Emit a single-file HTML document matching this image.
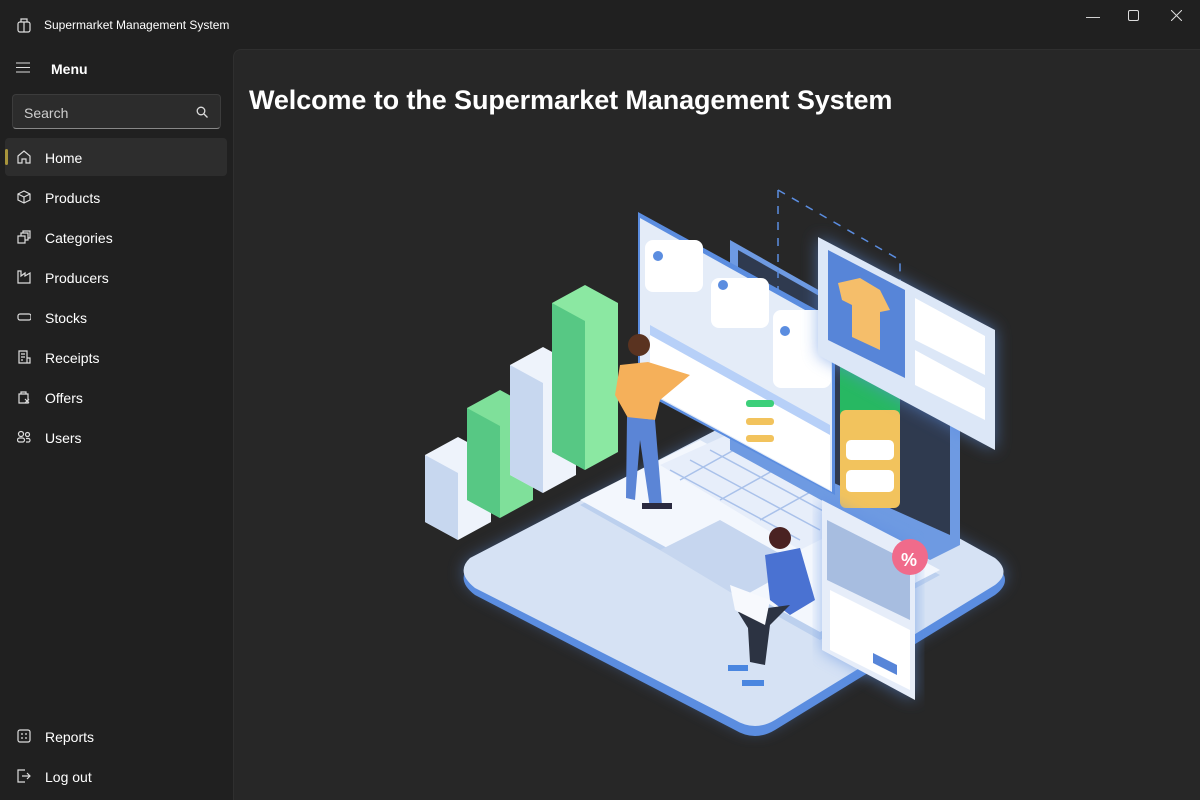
<!DOCTYPE html>
<html><head><meta charset="utf-8"><style>
*{margin:0;padding:0;box-sizing:border-box}
body{width:1200px;height:800px;background:#202020;font-family:"Segoe UI","Liberation Sans",sans-serif;color:#fff;overflow:hidden;position:relative}
.title{position:absolute;left:44px;top:18px;font-size:12px;color:#fff}
.ctrl{position:absolute;top:8px;font-size:14px;color:#ddd}
.menu{position:absolute;left:51px;top:61px;font-size:14px;font-weight:bold}
.search{position:absolute;left:12px;top:94px;width:209px;height:35px;background:#2c2c2c;border:1px solid #3c3c3c;border-bottom-color:#888;border-radius:4px;font-size:14px;color:#cfcfcf;padding:10px 11px}
.nav{position:absolute;left:5px;width:222px;height:38px;font-size:14px;display:flex;align-items:center}
.nav svg{position:absolute;left:12px;top:12px}
.nav span{position:absolute;left:40px;top:12px}
.sel{background:#2d2d2d;border-radius:4px}
.sel:before{content:"";position:absolute;left:0;top:11px;width:3px;height:16px;background:#a8953c;border-radius:2px}
.content{position:absolute;left:233px;top:49px;width:967px;height:751px;background:#272727;border-top-left-radius:8px;border-top:1px solid #2f2f2f;border-left:1px solid #2f2f2f}
h1{position:absolute;left:249px;top:85px;font-size:27px;font-weight:bold;letter-spacing:-0.1px}
</style></head><body>
<svg style="position:absolute;left:17px;top:17px" width="14" height="16" viewBox="0 0 14 16" fill="none" stroke="#ddd" stroke-width="1.2"><rect x="1" y="5" width="12" height="10" rx="2"/><path d="M4 5V2h6v3M7 5v10"/></svg>
<div class="title">Supermarket Management System</div>
<div class="ctrl" style="left:1086px">&#8212;</div>
<svg class="ctrl" style="left:1128px;top:10px" width="11" height="11"><rect x="0.5" y="0.5" width="10" height="10" rx="1.5" fill="none" stroke="#ddd"/></svg>
<svg class="ctrl" style="left:1171px;top:10px" width="11" height="11"><path d="M0 0L11 11M11 0L0 11" stroke="#ddd"/></svg>
<svg style="position:absolute;left:16px;top:62px" width="14" height="11"><path d="M0 1h14M0 5.5h14M0 10h14" stroke="#ddd"/></svg>
<div class="menu">Menu</div>
<div class="search">Search<svg style="position:absolute;right:12px;top:11px" width="12" height="12" fill="none" stroke="#ddd" stroke-width="1.3"><circle cx="5" cy="5" r="3.8"/><path d="M8 8l3.5 3.5"/></svg></div>
<div class="nav sel" style="top:138px"><svg width="14" height="14" fill="none" stroke="#ddd" stroke-width="1.2"><path d="M1 6L7 1l6 5v7H9V9H5v4H1z"/></svg><span>Home</span></div>
<div class="nav" style="top:178px"><svg width="14" height="14" fill="none" stroke="#ddd" stroke-width="1.2"><path d="M7 1l6 3v6l-6 3-6-3V4zM1 4l6 3 6-3M7 7v6"/></svg><span>Products</span></div>
<div class="nav" style="top:218px"><svg width="14" height="14" fill="none" stroke="#ddd" stroke-width="1.2"><rect x="1" y="6" width="7" height="7"/><path d="M4 6V3h7v7H8M6 3V1h7v7h-2"/></svg><span>Categories</span></div>
<div class="nav" style="top:258px"><svg width="14" height="14" fill="none" stroke="#ddd" stroke-width="1.2"><path d="M1 13V1h3v5l4-3v3l5-3v10z"/></svg><span>Producers</span></div>
<div class="nav" style="top:298px"><svg width="14" height="14" fill="none" stroke="#ddd" stroke-width="1.2"><rect x="1" y="4" width="13" height="6" rx="2"/></svg><span>Stocks</span></div>
<div class="nav" style="top:338px"><svg width="14" height="14" fill="none" stroke="#ddd" stroke-width="1.2"><path d="M2 1h8v12H2zM4 4h4M4 7h4M4 10h2M10 8h3v5h-3"/></svg><span>Receipts</span></div>
<div class="nav" style="top:378px"><svg width="14" height="14" fill="none" stroke="#ddd" stroke-width="1.2"><path d="M2 4h9v9H2zM4 4V2h5v2M8 9l4 4M8 13l4-4"/></svg><span>Offers</span></div>
<div class="nav" style="top:418px"><svg width="14" height="14" fill="none" stroke="#ddd" stroke-width="1.2"><circle cx="4" cy="4" r="2.5"/><circle cx="10.5" cy="4.5" r="2"/><rect x="0.5" y="8" width="7" height="4" rx="2"/><path d="M9 8.5h3a2 2 0 010 3.5H9"/></svg><span>Users</span></div>
<div class="nav" style="top:717px"><svg width="14" height="14" fill="none" stroke="#ddd" stroke-width="1.2"><rect x="1" y="1" width="12" height="12" rx="2"/><path d="M4 5h2M8 5h2M4 9h2M8 9h2"/></svg><span>Reports</span></div>
<div class="nav" style="top:757px"><svg width="14" height="14" fill="none" stroke="#ddd" stroke-width="1.2"><path d="M8 1H1v12h7M5 7h8M10 4l3 3-3 3"/></svg><span>Log out</span></div>
<div class="content"></div>
<h1>Welcome to the Supermarket Management System</h1>
<svg style="position:absolute;left:0;top:0" width="1200" height="800">
<defs><filter id="g"><feGaussianBlur stdDeviation="8"/></filter></defs>
<path d="M470 560 L720 430 Q740 420 760 430 L995 560 Q1015 575 995 590 L775 725 Q755 737 735 725 L475 590 Q455 575 470 560Z" fill="#5b8de0" filter="url(#g)" opacity=".5"/>
<path d="M470 565 L720 435 Q740 425 760 435 L995 565 Q1015 580 995 595 L775 730 Q755 742 735 730 L475 595 Q455 580 470 565Z" fill="#5b8de0"/>
<path d="M470 558 L720 428 Q740 418 760 428 L995 558 Q1012 572 995 585 L775 720 Q755 732 735 720 L475 588 Q455 572 470 558Z" fill="#d6e2f4"/>
<path d="M580 505 L700 445 L940 575 L820 640Z" fill="#bcd0ee"/>
<path d="M580 500 L700 440 L940 570 L820 632Z" fill="#f3f7fd"/>
<path d="M660 550 L720 520 L800 565 L740 598Z" fill="#c6d6ef"/>
<path d="M660 465 L760 420 L900 500 L800 550Z" fill="#e7eefa"/>
<g stroke="#a9c1ea" stroke-width="1.5"><path d="M670 470L800 540M690 460L820 530M710 450L840 520M730 440L860 510M680 480L770 430M720 500L810 450M760 520L850 470"/></g>
<path d="M730 240 L960 370 L960 545 L930 560 L730 450Z" fill="#6e9ae2"/>
<path d="M738 250 L950 370 L950 535 L738 440Z" fill="#2f3a4f"/>
<path d="M638 212 L835 320 L835 495 L638 390Z" fill="#5b8de0"/>
<path d="M640 218 L832 325 L832 492 L640 388Z" fill="#e4ecf8"/>
<rect x="645" y="240" width="58" height="52" rx="8" fill="#fff"/><circle cx="658" cy="256" r="5" fill="#5b8de0"/>
<rect x="711" y="278" width="58" height="50" rx="8" fill="#fff"/><circle cx="723" cy="285" r="5" fill="#5b8de0"/>
<rect x="773" y="310" width="58" height="78" rx="8" fill="#fff"/><circle cx="785" cy="331" r="5" fill="#5b8de0"/>
<path d="M650 330 L830 430 L830 490 L650 392Z" fill="#fff"/>
<path d="M650 325 L830 425 L830 435 L650 335Z" fill="#b7d0f8"/>
<rect x="746" y="400" width="28" height="7" rx="3" fill="#3ccf7a"/><rect x="746" y="418" width="28" height="7" rx="3" fill="#f2c35d"/><rect x="746" y="435" width="28" height="7" rx="3" fill="#f2c35d"/>
<rect x="840" y="350" width="60" height="80" rx="6" fill="#27b862"/>
<rect x="840" y="410" width="60" height="98" rx="6" fill="#f2c35d"/>
<rect x="846" y="440" width="48" height="20" rx="5" fill="#fff"/><rect x="846" y="470" width="48" height="22" rx="5" fill="#fff"/>
<path d="M778 190 L900 260 L900 290" stroke="#5b8de0" stroke-dasharray="8 8" fill="none" stroke-width="1.5"/>
<path d="M778 190 L778 300" stroke="#5b8de0" stroke-dasharray="8 8" stroke-width="1.5"/>
<path d="M818 237 L995 330 L995 450 L818 355Z" fill="#5b8de0" filter="url(#g)" opacity=".6"/>
<path d="M818 237 L995 330 L995 450 L818 355Z" fill="#dce7f7"/>
<path d="M828 250 L905 290 L905 378 L828 340Z" fill="#5785d8"/>
<path d="M838 283 L860 278 L880 290 L890 310 L880 312 L880 350 L852 337 L852 305 L842 300Z" fill="#f5be6a"/>
<path d="M915 298 L985 336 L985 375 L915 340Z" fill="#fff"/><path d="M915 350 L985 388 L985 420 L915 385Z" fill="#fff"/>
<path d="M822 500 L915 548 L915 700 L822 650Z" fill="#5b8de0" filter="url(#g)" opacity=".6"/>
<path d="M822 500 L915 548 L915 700 L822 650Z" fill="#e6edf9"/>
<path d="M827 520 L910 562 L910 620 L827 580Z" fill="#a7bde0"/>
<path d="M830 590 L910 630 L910 690 L830 650Z" fill="#fff"/>
<path d="M873 653 L897 665 L897 675 L873 663Z" fill="#5785d8"/>
<circle cx="910" cy="557" r="18" fill="#f06b8b"/><text x="901" y="566" font-size="18" font-weight="bold" fill="#fff" font-family="Liberation Sans">%</text>
<path d="M425 455 L458 437 L491 455 L491 522 L458 540 L425 522Z" fill="#eef3fb"/><path d="M425 455 L458 473 L458 540 L425 522Z" fill="#c7d7ef"/>
<path d="M467 408 L500 390 L533 408 L533 500 L500 518 L467 500Z" fill="#7fe09a"/><path d="M467 408 L500 426 L500 518 L467 500Z" fill="#57c884"/>
<path d="M510 365 L543 347 L576 365 L576 475 L543 493 L510 475Z" fill="#eef3fb"/><path d="M510 365 L543 383 L543 493 L510 475Z" fill="#c7d7ef"/>
<path d="M552 303 L585 285 L618 303 L618 452 L585 470 L552 452Z" fill="#8be8a2"/><path d="M552 303 L585 321 L585 470 L552 452Z" fill="#57c884"/>
<circle cx="639" cy="345" r="11" fill="#5a3320"/>
<path d="M620 365 L648 362 L690 375 L660 400 L655 420 L628 418 L615 395Z" fill="#f5b05a"/>
<path d="M627 417 L655 420 L662 505 L650 508 L640 440 L635 500 L626 498Z" fill="#5b85d6"/>
<path d="M642 503h30v6h-30z" fill="#2a2a3f"/>
<circle cx="780" cy="538" r="11" fill="#4a2222"/>
<path d="M765 555 L800 548 L815 600 L790 615 L770 600Z" fill="#4a72d2"/>
<path d="M738 612 L790 605 L770 625 L765 665 L750 662 L748 628Z" fill="#2c3342"/>
<path d="M730 585 L770 600 L765 625 L735 610Z" fill="#f7f9fd"/>
<path d="M728 665h20v6h-20zM742 680h22v6h-22z" fill="#4a86e0"/>
</svg>
</body></html>
